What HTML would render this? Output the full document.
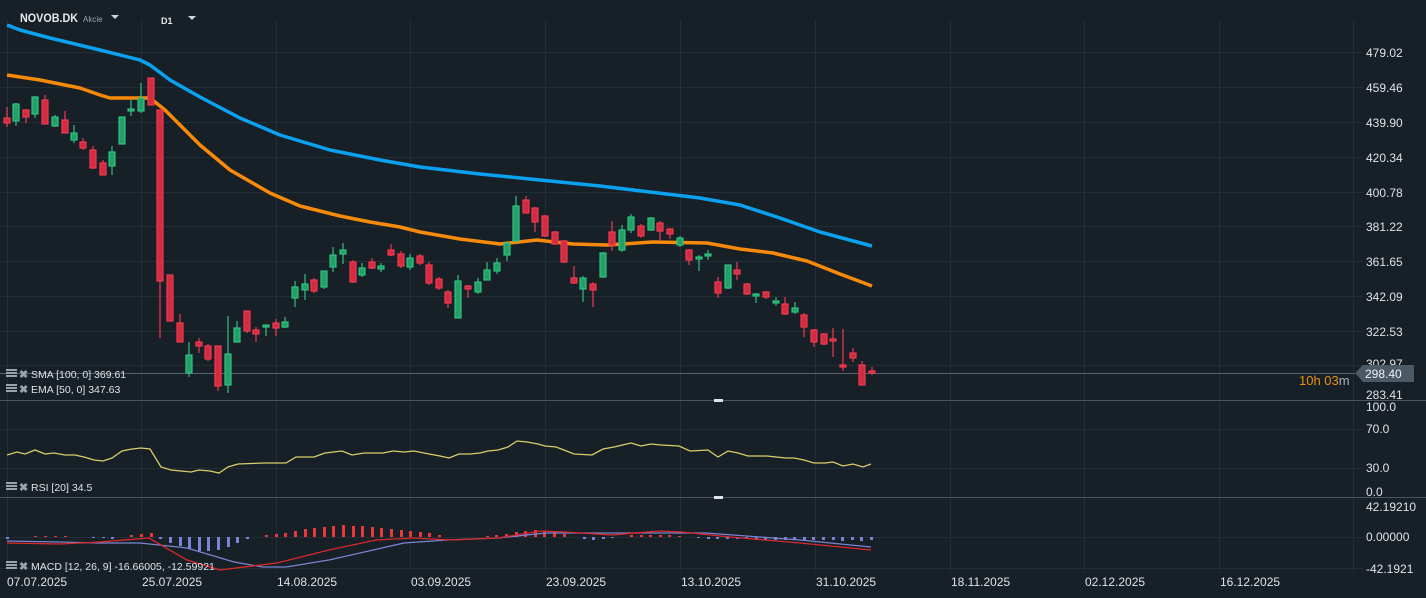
<!DOCTYPE html>
<html><head><meta charset="utf-8"><style>
html,body{margin:0;padding:0;background:#171f27;width:1426px;height:598px;overflow:hidden}
svg{display:block}
text{font-family:"Liberation Sans",Arial,sans-serif}
</style></head><body>
<svg width="1426" height="598" xmlns="http://www.w3.org/2000/svg">
<rect width="1426" height="598" fill="#171f27"/>
<g stroke="#232d36" stroke-width="1">
<line x1="7.5" y1="20" x2="7.5" y2="572"/>
<line x1="141.5" y1="20" x2="141.5" y2="572"/><line x1="276.5" y1="20" x2="276.5" y2="572"/><line x1="410.5" y1="20" x2="410.5" y2="572"/><line x1="545.5" y1="20" x2="545.5" y2="572"/><line x1="680.5" y1="20" x2="680.5" y2="572"/><line x1="815.5" y1="20" x2="815.5" y2="572"/><line x1="950.5" y1="20" x2="950.5" y2="572"/><line x1="1084.5" y1="20" x2="1084.5" y2="572"/><line x1="1219.5" y1="20" x2="1219.5" y2="572"/><line x1="1353.5" y1="20" x2="1353.5" y2="572"/>
<line x1="0" y1="52.5" x2="1363" y2="52.5"/><line x1="0" y1="87.5" x2="1363" y2="87.5"/><line x1="0" y1="122.5" x2="1363" y2="122.5"/><line x1="0" y1="157.5" x2="1363" y2="157.5"/><line x1="0" y1="192.5" x2="1363" y2="192.5"/><line x1="0" y1="226.5" x2="1363" y2="226.5"/><line x1="0" y1="261.5" x2="1363" y2="261.5"/><line x1="0" y1="296.5" x2="1363" y2="296.5"/><line x1="0" y1="331.5" x2="1363" y2="331.5"/><line x1="0" y1="365.5" x2="1363" y2="365.5"/>
<line x1="0" y1="429.5" x2="1363" y2="429.5"/><line x1="0" y1="468.5" x2="1363" y2="468.5"/>
<line x1="0" y1="537.5" x2="1363" y2="537.5"/><line x1="0" y1="568.5" x2="1363" y2="568.5"/>
</g>
<line x1="0" y1="373.5" x2="1355" y2="373.5" stroke="#58626c"/>
<line x1="0" y1="400.5" x2="1426" y2="400.5" stroke="#4a5560"/>
<line x1="0" y1="497.5" x2="1426" y2="497.5" stroke="#4a5560"/>
<rect x="714" y="399" width="9" height="3" fill="#e0e4e8"/>
<rect x="714" y="496" width="9" height="3" fill="#e0e4e8"/>

<polyline fill="none" stroke="#0aa2f0" stroke-width="3.5" stroke-linejoin="round" points="7,25 20,30 50,38 100,50 140,60 150,65 170,80 200,97 240,118 280,135 330,150 380,160 420,167 480,174 540,180 600,186 650,192 700,198 740,205 780,218 820,232 872,246"/>
<polyline fill="none" stroke="#f88a0a" stroke-width="3.5" stroke-linejoin="round" points="7,75 40,80 80,88 100,95 110,98 150,98 165,110 200,145 230,170 270,193 300,206 340,216 370,222 400,227 420,232 460,239 500,244 537,240 573,244 607,245 653,242 707,243 740,249 773,253 807,261 840,274 872,286"/>

<g stroke-width="1.2">
<g stroke="#f03a50" fill="#d22c43">
<line x1="7" y1="107" x2="7" y2="127"/><rect x="4" y="118" width="6" height="5"/>
<line x1="26" y1="109" x2="26" y2="123"/><rect x="23" y="110" width="6" height="7"/>
<line x1="45" y1="95" x2="45" y2="124"/><rect x="42" y="100" width="6" height="24"/>
<line x1="65" y1="111" x2="65" y2="133"/><rect x="62" y="120" width="6" height="13"/>
<line x1="83" y1="138" x2="83" y2="150"/><rect x="80" y="142" width="6" height="6"/>
<line x1="93" y1="146" x2="93" y2="169"/><rect x="90" y="150" width="6" height="18"/>
<line x1="103" y1="160" x2="103" y2="175"/><rect x="100" y="163" width="6" height="12"/>
<line x1="151" y1="78" x2="151" y2="105"/><rect x="148" y="78" width="6" height="27"/>
<line x1="160" y1="110" x2="160" y2="338"/><rect x="157" y="110" width="6" height="171"/>
<line x1="170" y1="275" x2="170" y2="321"/><rect x="167" y="275" width="6" height="46"/>
<line x1="180" y1="314" x2="180" y2="342"/><rect x="177" y="323" width="6" height="19"/>
<line x1="199" y1="338" x2="199" y2="353"/><rect x="196" y="342" width="6" height="4"/>
<line x1="208" y1="344" x2="208" y2="361"/><rect x="205" y="346" width="6" height="13"/>
<line x1="218" y1="346" x2="218" y2="391"/><rect x="215" y="346" width="6" height="40"/>
<line x1="247" y1="311" x2="247" y2="333"/><rect x="244" y="311" width="6" height="20"/>
<line x1="256" y1="327" x2="256" y2="342"/><rect x="253" y="330" width="6" height="4"/>
<line x1="276" y1="319" x2="276" y2="336"/><rect x="273" y="323" width="6" height="5"/>
<line x1="314" y1="278" x2="314" y2="293"/><rect x="311" y="280" width="6" height="11"/>
<line x1="353" y1="260" x2="353" y2="283"/><rect x="350" y="262" width="6" height="20"/>
<line x1="372" y1="258" x2="372" y2="269"/><rect x="369" y="262" width="6" height="6"/>
<line x1="391" y1="244" x2="391" y2="256"/><rect x="388" y="250" width="6" height="5"/>
<line x1="401" y1="251" x2="401" y2="268"/><rect x="398" y="254" width="6" height="12"/>
<line x1="420" y1="254" x2="420" y2="265"/><rect x="417" y="256" width="6" height="7"/>
<line x1="429" y1="262" x2="429" y2="285"/><rect x="426" y="265" width="6" height="18"/>
<line x1="439" y1="277" x2="439" y2="290"/><rect x="436" y="279" width="6" height="9"/>
<line x1="448" y1="290" x2="448" y2="308"/><rect x="445" y="292" width="6" height="11"/>
<line x1="468" y1="285" x2="468" y2="298"/><rect x="465" y="286" width="6" height="3"/>
<line x1="526" y1="196" x2="526" y2="213"/><rect x="523" y="200" width="6" height="13"/>
<line x1="535" y1="207" x2="535" y2="232"/><rect x="532" y="208" width="6" height="14"/>
<line x1="545" y1="215" x2="545" y2="237"/><rect x="542" y="216" width="6" height="20"/>
<line x1="555" y1="231" x2="555" y2="245"/><rect x="552" y="232" width="6" height="12"/>
<line x1="564" y1="240" x2="564" y2="263"/><rect x="561" y="241" width="6" height="21"/>
<line x1="574" y1="266" x2="574" y2="284"/><rect x="571" y="278" width="6" height="5"/>
<line x1="593" y1="282" x2="593" y2="307"/><rect x="590" y="284" width="6" height="6"/>
<line x1="612" y1="221" x2="612" y2="251"/><rect x="609" y="232" width="6" height="13"/>
<line x1="641" y1="224" x2="641" y2="238"/><rect x="638" y="226" width="6" height="10"/>
<line x1="660" y1="221" x2="660" y2="241"/><rect x="657" y="223" width="6" height="8"/>
<line x1="670" y1="228" x2="670" y2="239"/><rect x="667" y="229" width="6" height="5"/>
<line x1="689" y1="249" x2="689" y2="265"/><rect x="686" y="250" width="6" height="10"/>
<line x1="718" y1="277" x2="718" y2="298"/><rect x="715" y="282" width="6" height="11"/>
<line x1="737" y1="262" x2="737" y2="280"/><rect x="734" y="270" width="6" height="4"/>
<line x1="747" y1="283" x2="747" y2="295"/><rect x="744" y="284" width="6" height="10"/>
<line x1="766" y1="291" x2="766" y2="299"/><rect x="763" y="292" width="6" height="5"/>
<line x1="785" y1="297" x2="785" y2="315"/><rect x="782" y="304" width="6" height="10"/>
<line x1="804" y1="313" x2="804" y2="337"/><rect x="801" y="315" width="6" height="12"/>
<line x1="814" y1="329" x2="814" y2="347"/><rect x="811" y="330" width="6" height="12"/>
<line x1="824" y1="333" x2="824" y2="345"/><rect x="821" y="334" width="6" height="10"/>
<line x1="833" y1="328" x2="833" y2="357"/><rect x="830" y="339" width="6" height="2"/>
<line x1="843" y1="329" x2="843" y2="371"/><rect x="840" y="365" width="6" height="2"/>
<line x1="853" y1="348" x2="853" y2="362"/><rect x="850" y="353" width="6" height="5"/>
<line x1="862" y1="361" x2="862" y2="385"/><rect x="859" y="365" width="6" height="20"/>
<line x1="872" y1="367" x2="872" y2="375"/><rect x="869" y="371" width="6" height="2"/>
</g>
<g stroke="#30c080" fill="#23a068">
<line x1="16" y1="103" x2="16" y2="126"/><rect x="13" y="104" width="6" height="17"/>
<line x1="35" y1="96" x2="35" y2="118"/><rect x="32" y="97" width="6" height="17"/>
<line x1="55" y1="115" x2="55" y2="127"/><rect x="52" y="117" width="6" height="9"/>
<line x1="74" y1="125" x2="74" y2="143"/><rect x="71" y="133" width="6" height="7"/>
<line x1="112" y1="146" x2="112" y2="175"/><rect x="109" y="152" width="6" height="14"/>
<line x1="122" y1="117" x2="122" y2="144"/><rect x="119" y="117" width="6" height="27"/>
<line x1="131" y1="100" x2="131" y2="116"/><rect x="128" y="109" width="6" height="2"/>
<line x1="141" y1="83" x2="141" y2="113"/><rect x="138" y="98" width="6" height="13"/>
<line x1="189" y1="342" x2="189" y2="377"/><rect x="186" y="355" width="6" height="18"/>
<line x1="228" y1="316" x2="228" y2="393"/><rect x="225" y="354" width="6" height="31"/>
<line x1="237" y1="321" x2="237" y2="342"/><rect x="234" y="328" width="6" height="14"/>
<line x1="266" y1="325" x2="266" y2="336"/><rect x="263" y="325" width="6" height="2"/>
<line x1="285" y1="317" x2="285" y2="328"/><rect x="282" y="322" width="6" height="5"/>
<line x1="295" y1="281" x2="295" y2="307"/><rect x="292" y="287" width="6" height="11"/>
<line x1="305" y1="274" x2="305" y2="300"/><rect x="302" y="284" width="6" height="6"/>
<line x1="324" y1="271" x2="324" y2="289"/><rect x="321" y="271" width="6" height="16"/>
<line x1="333" y1="247" x2="333" y2="272"/><rect x="330" y="255" width="6" height="12"/>
<line x1="343" y1="243" x2="343" y2="264"/><rect x="340" y="250" width="6" height="4"/>
<line x1="362" y1="263" x2="362" y2="277"/><rect x="359" y="268" width="6" height="7"/>
<line x1="381" y1="263" x2="381" y2="272"/><rect x="378" y="266" width="6" height="3"/>
<line x1="410" y1="254" x2="410" y2="270"/><rect x="407" y="258" width="6" height="9"/>
<line x1="458" y1="275" x2="458" y2="318"/><rect x="455" y="281" width="6" height="37"/>
<line x1="478" y1="278" x2="478" y2="294"/><rect x="475" y="282" width="6" height="10"/>
<line x1="487" y1="262" x2="487" y2="280"/><rect x="484" y="270" width="6" height="10"/>
<line x1="497" y1="258" x2="497" y2="274"/><rect x="494" y="263" width="6" height="8"/>
<line x1="507" y1="242" x2="507" y2="261"/><rect x="504" y="243" width="6" height="12"/>
<line x1="516" y1="196" x2="516" y2="242"/><rect x="513" y="206" width="6" height="35"/>
<line x1="583" y1="276" x2="583" y2="302"/><rect x="580" y="278" width="6" height="11"/>
<line x1="603" y1="252" x2="603" y2="278"/><rect x="600" y="253" width="6" height="24"/>
<line x1="622" y1="225" x2="622" y2="252"/><rect x="619" y="230" width="6" height="20"/>
<line x1="631" y1="214" x2="631" y2="233"/><rect x="628" y="217" width="6" height="13"/>
<line x1="651" y1="217" x2="651" y2="231"/><rect x="648" y="218" width="6" height="12"/>
<line x1="680" y1="236" x2="680" y2="247"/><rect x="677" y="238" width="6" height="7"/>
<line x1="699" y1="255" x2="699" y2="271"/><rect x="696" y="257" width="6" height="2"/>
<line x1="708" y1="250" x2="708" y2="260"/><rect x="705" y="254" width="6" height="2"/>
<line x1="728" y1="265" x2="728" y2="289"/><rect x="725" y="265" width="6" height="23"/>
<line x1="756" y1="293" x2="756" y2="303"/><rect x="753" y="294" width="6" height="2"/>
<line x1="776" y1="297" x2="776" y2="306"/><rect x="773" y="301" width="6" height="2"/>
<line x1="795" y1="302" x2="795" y2="314"/><rect x="792" y="308" width="6" height="4"/>
</g>
</g>

<polyline fill="none" stroke="#d8cf6a" stroke-width="1.3" points="7,455 17,452 25,454 35,450 45,454 54,453 65,455 75,455 84,457 94,460 103,461 112,458 122,451 132,449 141,448 150,449 161,467 171,470 191,472 199,470 210,471 219,473 228,467 238,464 264,463 286,463 296,457 314,457 325,453 342,451 352,455 364,453 383,453 393,451 404,452 414,451 429,454 440,456 449,458 459,454 470,454 480,453 488,451 498,450 508,447 517,441 527,442 538,444 545,446 556,447 564,450 574,454 592,455 603,449 614,447 631,443 641,446 651,444 661,445 679,446 690,451 708,450 718,457 728,451 738,453 748,456 767,456 776,457 786,458 794,458 804,460 814,463 825,463 833,462 843,466 853,464 863,467 871,464"/>

<g fill="#7a84d8">
<rect x="6" y="537" width="3" height="2"/><rect x="92" y="537" width="3" height="1"/><rect x="102" y="537" width="3" height="1"/><rect x="111" y="537" width="3" height="2"/>
<rect x="159" y="537" width="3" height="2"/><rect x="169" y="537" width="3" height="6"/><rect x="179" y="537" width="3" height="9"/><rect x="188" y="537" width="3" height="12"/><rect x="198" y="537" width="3" height="14"/><rect x="207" y="537" width="3" height="14"/><rect x="217" y="537" width="3" height="13"/><rect x="227" y="537" width="3" height="10"/><rect x="236" y="537" width="3" height="6"/><rect x="246" y="537" width="3" height="2"/>
<rect x="583" y="537" width="3" height="2"/><rect x="592" y="537" width="3" height="3"/><rect x="602" y="537" width="3" height="2"/><rect x="611" y="537" width="3" height="1"/>
<rect x="697" y="537" width="3" height="1"/><rect x="707" y="537" width="3" height="2"/><rect x="716" y="537" width="3" height="2"/><rect x="726" y="537" width="3" height="2"/><rect x="736" y="537" width="3" height="2"/><rect x="745" y="537" width="3" height="2"/><rect x="755" y="537" width="3" height="3"/><rect x="764" y="537" width="3" height="3"/><rect x="774" y="537" width="3" height="3"/><rect x="784" y="537" width="3" height="3"/><rect x="793" y="537" width="3" height="3"/><rect x="803" y="537" width="3" height="3"/><rect x="812" y="537" width="3" height="3"/><rect x="822" y="537" width="3" height="3"/><rect x="832" y="537" width="3" height="3"/><rect x="841" y="537" width="3" height="4"/><rect x="851" y="537" width="3" height="3"/><rect x="860" y="537" width="3" height="4"/><rect x="870" y="537" width="3" height="3"/>
</g>
<g fill="#e8383a">
<rect x="34" y="536" width="3" height="1"/><rect x="44" y="536" width="3" height="1"/><rect x="54" y="536" width="3" height="1"/><rect x="64" y="536" width="3" height="1"/>
<rect x="130" y="535" width="3" height="2"/><rect x="140" y="534" width="3" height="3"/><rect x="150" y="533" width="3" height="4"/>
<rect x="265" y="535" width="3" height="2"/><rect x="275" y="534" width="3" height="3"/><rect x="284" y="533" width="3" height="4"/><rect x="294" y="531" width="3" height="6"/><rect x="304" y="529" width="3" height="8"/><rect x="313" y="528" width="3" height="9"/><rect x="323" y="527" width="3" height="10"/><rect x="332" y="526" width="3" height="11"/><rect x="342" y="525" width="3" height="12"/><rect x="352" y="526" width="3" height="11"/><rect x="361" y="526" width="3" height="11"/><rect x="371" y="527" width="3" height="10"/><rect x="380" y="528" width="3" height="9"/><rect x="390" y="529" width="3" height="8"/><rect x="400" y="530" width="3" height="7"/><rect x="409" y="531" width="3" height="6"/><rect x="419" y="532" width="3" height="5"/><rect x="428" y="533" width="3" height="4"/><rect x="438" y="535" width="3" height="2"/>
<rect x="486" y="536" width="3" height="1"/><rect x="495" y="535" width="3" height="2"/><rect x="505" y="534" width="3" height="3"/><rect x="515" y="532" width="3" height="5"/><rect x="524" y="531" width="3" height="6"/><rect x="534" y="530" width="3" height="7"/><rect x="543" y="531" width="3" height="6"/><rect x="553" y="532" width="3" height="5"/><rect x="563" y="534" width="3" height="3"/>
<rect x="630" y="535" width="3" height="2"/><rect x="640" y="535" width="3" height="2"/><rect x="649" y="535" width="3" height="2"/><rect x="659" y="535" width="3" height="2"/><rect x="668" y="535" width="3" height="2"/><rect x="678" y="536" width="3" height="1"/>
</g>
<polyline fill="none" stroke="#7a84d0" stroke-width="1.3" points="7,541 60,542 100,543 140,543 187,548 234,562 263,567 286,567 329,560 404,543 447,540 498,538 546,533 612,533 706,533 800,540 871,547"/>
<polyline fill="none" stroke="#d82a2a" stroke-width="1.3" points="7,543 60,544 100,542 149,538 187,560 220,570 277,563 329,550 376,540 414,538 451,540 498,538 541,531 565,532 612,535 659,531 682,532 730,537 800,543 871,550"/>

<text x="20" y="22" font-size="12" font-weight="bold" fill="#e6e9ec" textLength="58" lengthAdjust="spacingAndGlyphs">NOVOB.DK</text>
<text x="83" y="22" font-size="8" fill="#9aa3ab">Akcie</text>
<path d="M111 15 L119 15 L115 19 Z" fill="#d0d4d8"/>
<text x="161" y="24" font-size="9" font-weight="bold" fill="#e6e9ec">D1</text>
<path d="M188 16 L196 16 L192 20 Z" fill="#d0d4d8"/>

<g font-size="10.5" fill="#dfe3e7">
<text x="31" y="378">SMA [100,  0] 369.61</text>
<text x="31" y="393">EMA [50,  0] 347.63</text>
<text x="31" y="491">RSI [20]  34.5</text>
<text x="31" y="570">MACD [12,  26,  9] -16.66005,  -12.59921</text>
</g>
<g fill="#9aa3ab">
<rect x="6" y="369" width="11" height="2"/><rect x="6" y="372" width="11" height="2"/><rect x="6" y="375" width="11" height="2"/>
<rect x="6" y="384" width="11" height="2"/><rect x="6" y="387" width="11" height="2"/><rect x="6" y="390" width="11" height="2"/>
<rect x="6" y="482" width="11" height="2"/><rect x="6" y="485" width="11" height="2"/><rect x="6" y="488" width="11" height="2"/>
<rect x="6" y="561" width="11" height="2"/><rect x="6" y="564" width="11" height="2"/><rect x="6" y="567" width="11" height="2"/>
</g>
<g font-size="11" font-weight="bold" fill="#9aa3ab">
<text x="19" y="378">✖</text><text x="19" y="393">✖</text><text x="19" y="491">✖</text><text x="19" y="570">✖</text>
</g>

<g font-size="12" fill="#dfe3e7">
<text x="1366" y="57">479.02</text><text x="1366" y="92">459.46</text><text x="1366" y="127">439.90</text><text x="1366" y="162">420.34</text><text x="1366" y="197">400.78</text><text x="1366" y="231">381.22</text><text x="1366" y="266">361.65</text><text x="1366" y="301">342.09</text><text x="1366" y="336">322.53</text><text x="1366" y="368">302.97</text><text x="1366" y="399">283.41</text>
<text x="1366" y="411">100.0</text><text x="1366" y="433">70.0</text><text x="1366" y="472">30.0</text><text x="1366" y="496">0.0</text>
<text x="1366" y="511">42.19210</text><text x="1366" y="541">0.00000</text><text x="1366" y="573">-42.1921</text>
</g>
<path d="M1355 373 L1363 365 L1414 365 L1414 382 L1363 382 Z" fill="#4c5a66"/>
<text x="1365" y="378" font-size="12" fill="#eef1f4">298.40</text>
<text x="1299" y="385" font-size="13" fill="#e8920c">10h 03<tspan fill="#aab2ba">m</tspan></text>

<g font-size="12" fill="#dfe3e7">
<text x="7" y="586">07.07.2025</text><text x="142" y="586">25.07.2025</text><text x="277" y="586">14.08.2025</text><text x="411" y="586">03.09.2025</text><text x="546" y="586">23.09.2025</text><text x="681" y="586">13.10.2025</text><text x="816" y="586">31.10.2025</text><text x="951" y="586">18.11.2025</text><text x="1085" y="586">02.12.2025</text><text x="1220" y="586">16.12.2025</text>
</g>
</svg>
</body></html>
